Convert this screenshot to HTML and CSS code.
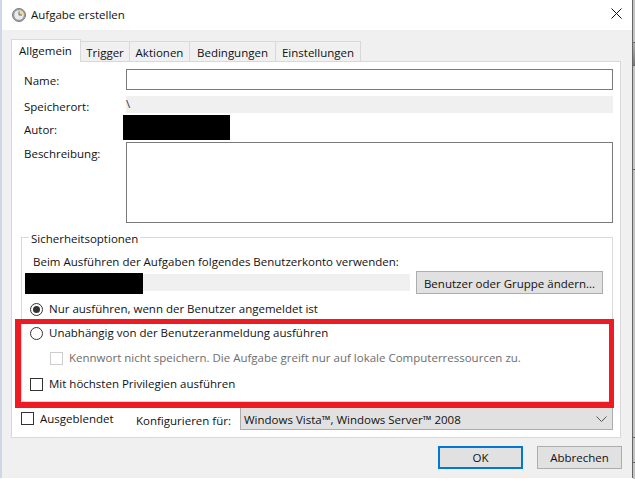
FILE: index.html
```html
<!DOCTYPE html>
<html lang="de">
<head>
<meta charset="utf-8">
<title>Aufgabe erstellen</title>
<link rel="stylesheet" href="styles.css">
</head>
<body>
<div class="window">
  <header class="titlebar">
    <svg class="clock" width="14" height="14" viewBox="0 0 14 14"><circle cx="7" cy="7" r="6.5" fill="#9a9ea4" stroke="#7c8087"/><circle cx="7" cy="7" r="4.8" fill="#e8eaee"/><path d="M7 2.2A4.8 4.8 0 0 1 11.8 7H7z" fill="#f0d898"/><path d="M7 3.5V7h3" fill="none" stroke="#666" stroke-width="1"/></svg>
    <span class="title">Aufgabe erstellen</span>
    <svg class="close" width="11" height="11" viewBox="0 0 11 11"><path d="M.5.5l10 10M10.5.5l-10 10" stroke="#111" stroke-width="1" fill="none"/></svg>
  </header>
  <main class="content">
    <nav class="tabs">
      <div class="tab active">Allgemein</div>
      <div class="tab t-trigger">Trigger</div>
      <div class="tab t-aktionen">Aktionen</div>
      <div class="tab t-bed">Bedingungen</div>
      <div class="tab t-einst">Einstellungen</div>
    </nav>
    <section class="panel">
      <div class="form-row row-name"><label class="lbl">Name:</label><div class="input name"></div></div>
      <div class="form-row row-loc"><label class="lbl">Speicherort:</label><div class="readonly">\</div></div>
      <div class="form-row row-author"><label class="lbl">Autor:</label></div>
      <div class="form-row row-desc"><label class="lbl">Beschreibung:</label><div class="input desc"></div></div>
      <fieldset class="group">
        <legend>Sicherheitsoptionen</legend>
        <p class="account-text">Beim Ausführen der Aufgaben folgendes Benutzerkonto verwenden:</p>
        <div class="account-row"><div class="readonly account"></div><div class="btn change">Benutzer oder Gruppe ändern...</div></div>
        <div class="opt opt-1"><span class="radio checked"></span>Nur ausführen, wenn der Benutzer angemeldet ist</div>
        <div class="opt opt-2"><span class="radio"></span>Unabhängig von der Benutzeranmeldung ausführen</div>
        <div class="opt opt-3 disabled"><span class="check"></span>Kennwort nicht speichern. Die Aufgabe greift nur auf lokale Computerressourcen zu.</div>
        <div class="opt opt-4"><span class="check"></span>Mit höchsten Privilegien ausführen</div>
      </fieldset>
      <div class="bottom-row">
        <div class="opt hidden-opt"><span class="check"></span>Ausgeblendet</div>
        <span class="cfg-label">Konfigurieren für:</span>
        <div class="select">Windows Vista™, Windows Server™ 2008
          <svg class="chev" width="11" height="6" viewBox="0 0 11 6"><path d="M.5.5l5 5 5-5" fill="none" stroke="#555"/></svg>
        </div>
      </div>
      <div class="black black-author"></div>
      <div class="black black-account"></div>
      <div class="redbox"></div>
    </section>
    <footer class="actions">
      <div class="btn ok">OK</div>
      <div class="btn cancel">Abbrechen</div>
    </footer>
  </main>
</div>
<div class="edge"></div>
</body>
</html>
```
FILE: styles.css
```css
* { box-sizing: border-box; }
html, body { margin: 0; height: 100%; }
body {
  width: 635px; height: 479px; overflow: hidden;
  background: #fff;
  display: flex; align-items: flex-start;
  font-family: "Open Sans", "Noto Sans", "Liberation Sans", sans-serif;
  font-size: 11.5px; color: #111;
}
.window {
  width: 633px; height: 478px; flex: none;
  border-left: 2px solid #cdd7e8;
  border-right: 1px solid #666;
  display: flex; flex-direction: column;
  background: #f0f0f0;
}
.edge {
  width: 2px; height: 479px; flex: none;
  background:
    linear-gradient(#666, #666) 0 42px / 2px 1px no-repeat,
    linear-gradient(#666, #666) 0 65px / 2px 1px no-repeat,
    linear-gradient(#666, #666) 0 169px / 2px 1px no-repeat,
    linear-gradient(#666, #666) 0 437px / 2px 1px no-repeat,
    linear-gradient(#666, #666) 0 462px / 2px 1px no-repeat,
    linear-gradient(#b0b0b0, #777) 0 43px / 2px 22px no-repeat,
    #c4c4c4;
}
.titlebar {
  height: 30px; flex: none; background: #fff;
  display: flex; align-items: center;
  padding: 0 8px 0 10px; gap: 5px;
}
.title { flex: 1; padding-bottom: 2px; }
.close { margin: 0 2px 3px 0; }
.content { flex: 1; padding: 9px 9px 0 9px; display: flex; flex-direction: column; }
.tabs { display: flex; height: 22px; align-items: flex-end; position: relative; z-index: 1; }
.tab {
  height: 20px; line-height: 21px; text-align: center;
  border: 1px solid #d9d9d9; border-bottom: 0; border-left: 0;
}
.t-trigger { width: 49px; }
.t-aktionen { width: 60px; }
.t-bed { width: 86px; }
.t-einst { width: 85px; }
.tab.active {
  height: 23px; width: 70px; margin-bottom: -1px; padding-left: 7px; line-height: 21px; text-align: left;
  background: #fff; border: 1px solid #d9d9d9; border-bottom: 0;
}
.panel {
  width: 610px; height: 377px; flex: none; background: #fff;
  border: 1px solid #d9d9d9; position: relative;
  padding: 7px 0 0 0;
}
.form-row { display: flex; padding-left: 12px; }
.lbl { width: 102px; flex: none; line-height: 16px; }
.row-name { height: 27px; }
.row-name .lbl { padding-top: 4px; box-sizing: content-box; }
.row-loc { height: 19px; }
.row-loc .lbl { padding-top: 3px; }
.row-author { height: 27px; }
.row-author .lbl { padding-top: 7px; }
.row-desc { height: 86px; }
.row-desc .lbl { padding-top: 4px; }
.input { border: 1px solid #7a7a7a; background: #fff; width: 487px; }
.input.name { height: 21px; }
.input.desc { height: 81px; }
.readonly { background: #f0f0f0; width: 487px; height: 17px; line-height: 15px; color: #333; }
.group {
  margin: 0 0 0 9px; width: 592px; height: 174px;
  border: 1px solid #d9d9d9; padding: 0; min-width: 0;
  position: relative;
}
legend { margin-left: 7px; padding: 4px 2px 0; line-height: 14px; }
.account-text { margin: 8px 0 0 11px; line-height: 16px; }
.account-row { display: flex; align-items: center; margin: 1px 0 0 3px; height: 23px; gap: 6px; }
.account { width: 385px; }
.btn {
  background: #e1e1e1; border: 1px solid #adadad;
  display: flex; align-items: center; justify-content: center;
}
.change { width: 187px; height: 23px; padding-top: 1px; }
.opt { display: flex; align-items: center; gap: 6px; line-height: 16px; height: 16px; }
.opt-1 { margin: 7px 0 0 8px; }
.opt-2 { margin: 8px 0 0 8px; }
.opt-3 { margin: 9px 0 0 28px; color: #6d6d6d; }
.opt-4 { margin: 10px 0 0 8px; }
.radio {
  width: 13px; height: 13px; border-radius: 50%; border: 1px solid #333; flex: none;
  background: #fff; position: relative;
}
.radio.checked::after {
  content: ""; position: absolute; left: 2px; top: 2px; width: 7px; height: 7px;
  border-radius: 50%; background: #333;
}
.check { width: 13px; height: 13px; border: 1px solid #333; background: #fff; flex: none; }
.disabled .check { border-color: #ccc; }
.bottom-row { display: flex; align-items: center; height: 23px; margin: 5px 0 0 9px; }
.hidden-opt { width: 115px; flex: none; }
.cfg-label { width: 104px; flex: none; padding-top: 3px; }
.select {
  width: 373px; height: 23px; background: #e1e1e1; border: 1px solid #adadad;
  padding-left: 3px; line-height: 23px; position: relative;
}
.chev { position: absolute; right: 5px; top: 8px; }
.actions { display: flex; padding: 8px 0 0 427px; gap: 14px; }
.ok { width: 85px; height: 23px; border: 2px solid #0078d7; }
.cancel { width: 85px; height: 23px; }
.black { position: absolute; background: #000; }
.black-author { left: 111px; top: 53px; width: 107px; height: 25px; }
.black-account { left: 13px; top: 211px; width: 118px; height: 21px; }
.redbox {
  position: absolute; left: 3px; top: 257px; width: 599px; height: 89px;
  border: solid #ed1c24; border-width: 5px 5px 6px 6px; pointer-events: none;
}
```
